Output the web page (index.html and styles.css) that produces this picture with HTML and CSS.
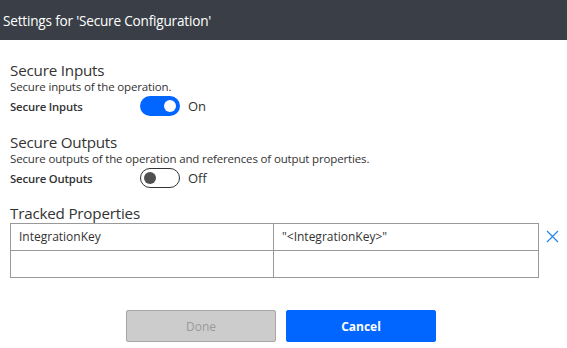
FILE: index.html
```html
<!DOCTYPE html>
<html>
<head>
<meta charset="utf-8">
<link rel="stylesheet" href="styles.css">
</head>
<body>
<div class="dialog">
  <div class="header"><span class="title">Settings for 'Secure Configuration'</span></div>
  <div class="content">
    <div class="section">
      <div class="heading">Secure Inputs</div>
      <div class="desc">Secure inputs of the operation.</div>
      <div class="row">
        <span class="label">Secure Inputs</span>
        <span class="toggle on"><span class="knob"></span></span>
        <span class="state">On</span>
      </div>
    </div>
    <div class="section second">
      <div class="heading">Secure Outputs</div>
      <div class="desc">Secure outputs of the operation and references of output properties.</div>
      <div class="row">
        <span class="label">Secure Outputs</span>
        <span class="toggle off"><span class="knob"></span></span>
        <span class="state">Off</span>
      </div>
    </div>
    <div class="section third">
      <div class="heading">Tracked Properties</div>
      <div class="tablewrap">
        <div class="grid">
          <div class="cell">IntegrationKey</div>
          <div class="cell">"&lt;IntegrationKey&gt;"</div>
          <div class="cell"></div>
          <div class="cell"></div>
        </div>
        <svg class="close" width="13" height="13" viewBox="0 0 13 13"><path d="M1 1 L12 12 M12 1 L1 12" stroke="#2b88e8" stroke-width="1.3" fill="none"/></svg>
      </div>
    </div>
    <div class="buttons">
      <button class="btn done">Done</button>
      <button class="btn cancel">Cancel</button>
    </div>
  </div>
</div>
</body>
</html>
```
FILE: styles.css
```css
html, body { margin: 0; padding: 0; background: #fff; }
body { font-family: "Open Sans", "Noto Sans", sans-serif; color: #333; width: 567px; height: 348px; overflow: hidden; }
.header { height: 40px; background: #3a3f47; display: flex; align-items: center; padding-left: 3px; }
.title { color: #fff; font-size: 13.6px; letter-spacing: -0.2px; }
.content { padding: 20px 0 0 10px; }
.heading { font-size: 15.2px; line-height: 20px; color: #333; letter-spacing: -0.2px; }
.desc { font-size: 11.5px; line-height: 14px; color: #333; letter-spacing: -0.15px; }
.row { display: flex; align-items: center; height: 22px; margin-top: 1px; }
.label { width: 130px; font-size: 11.3px; font-weight: 600; color: #333; letter-spacing: -0.15px; }
.toggle { width: 40px; height: 20px; border-radius: 10px; box-sizing: border-box; position: relative; display: block; }
.toggle.on { background: #0066ff; }
.toggle.off { background: #fff; border: 1px solid #333; }
.knob { position: absolute; width: 12px; height: 12px; border-radius: 50%; top: 4px; }
.toggle.on .knob { background: #fff; right: 4px; }
.toggle.off .knob { background: #505050; left: 3px; top: 3px; }
.state { margin-left: 8px; font-size: 13px; color: #333; }
.second { margin-top: 15px; }
.third { margin-top: 14px; }
.tablewrap { display: flex; align-items: flex-start; }
.grid { display: grid; grid-template-columns: 263px 264px; border: 1px solid #999; width: 529px; box-sizing: border-box; }
.cell { height: 27px; box-sizing: border-box; border-right: 1px solid #999; border-bottom: 1px solid #999; padding-left: 8px; font-size: 12px; line-height: 26px; color: #333; }
.cell:nth-child(2n) { border-right: none; }
.cell:nth-child(n+3) { border-bottom: none; height: 26px; }
.close { margin-left: 7px; margin-top: 7px; }
.buttons { display: flex; gap: 10px; margin-top: 32px; padding-left: 116px; }
.btn { width: 150px; height: 32px; font-family: inherit; font-size: 12px; border-radius: 2px; box-sizing: border-box; }
.done { background: #cccccc; border: 1px solid #a6a6a6; color: #9a9a9a; }
.cancel { background: #0066ff; border: 1px solid #0066ff; color: #fff; font-weight: 700; }
```
